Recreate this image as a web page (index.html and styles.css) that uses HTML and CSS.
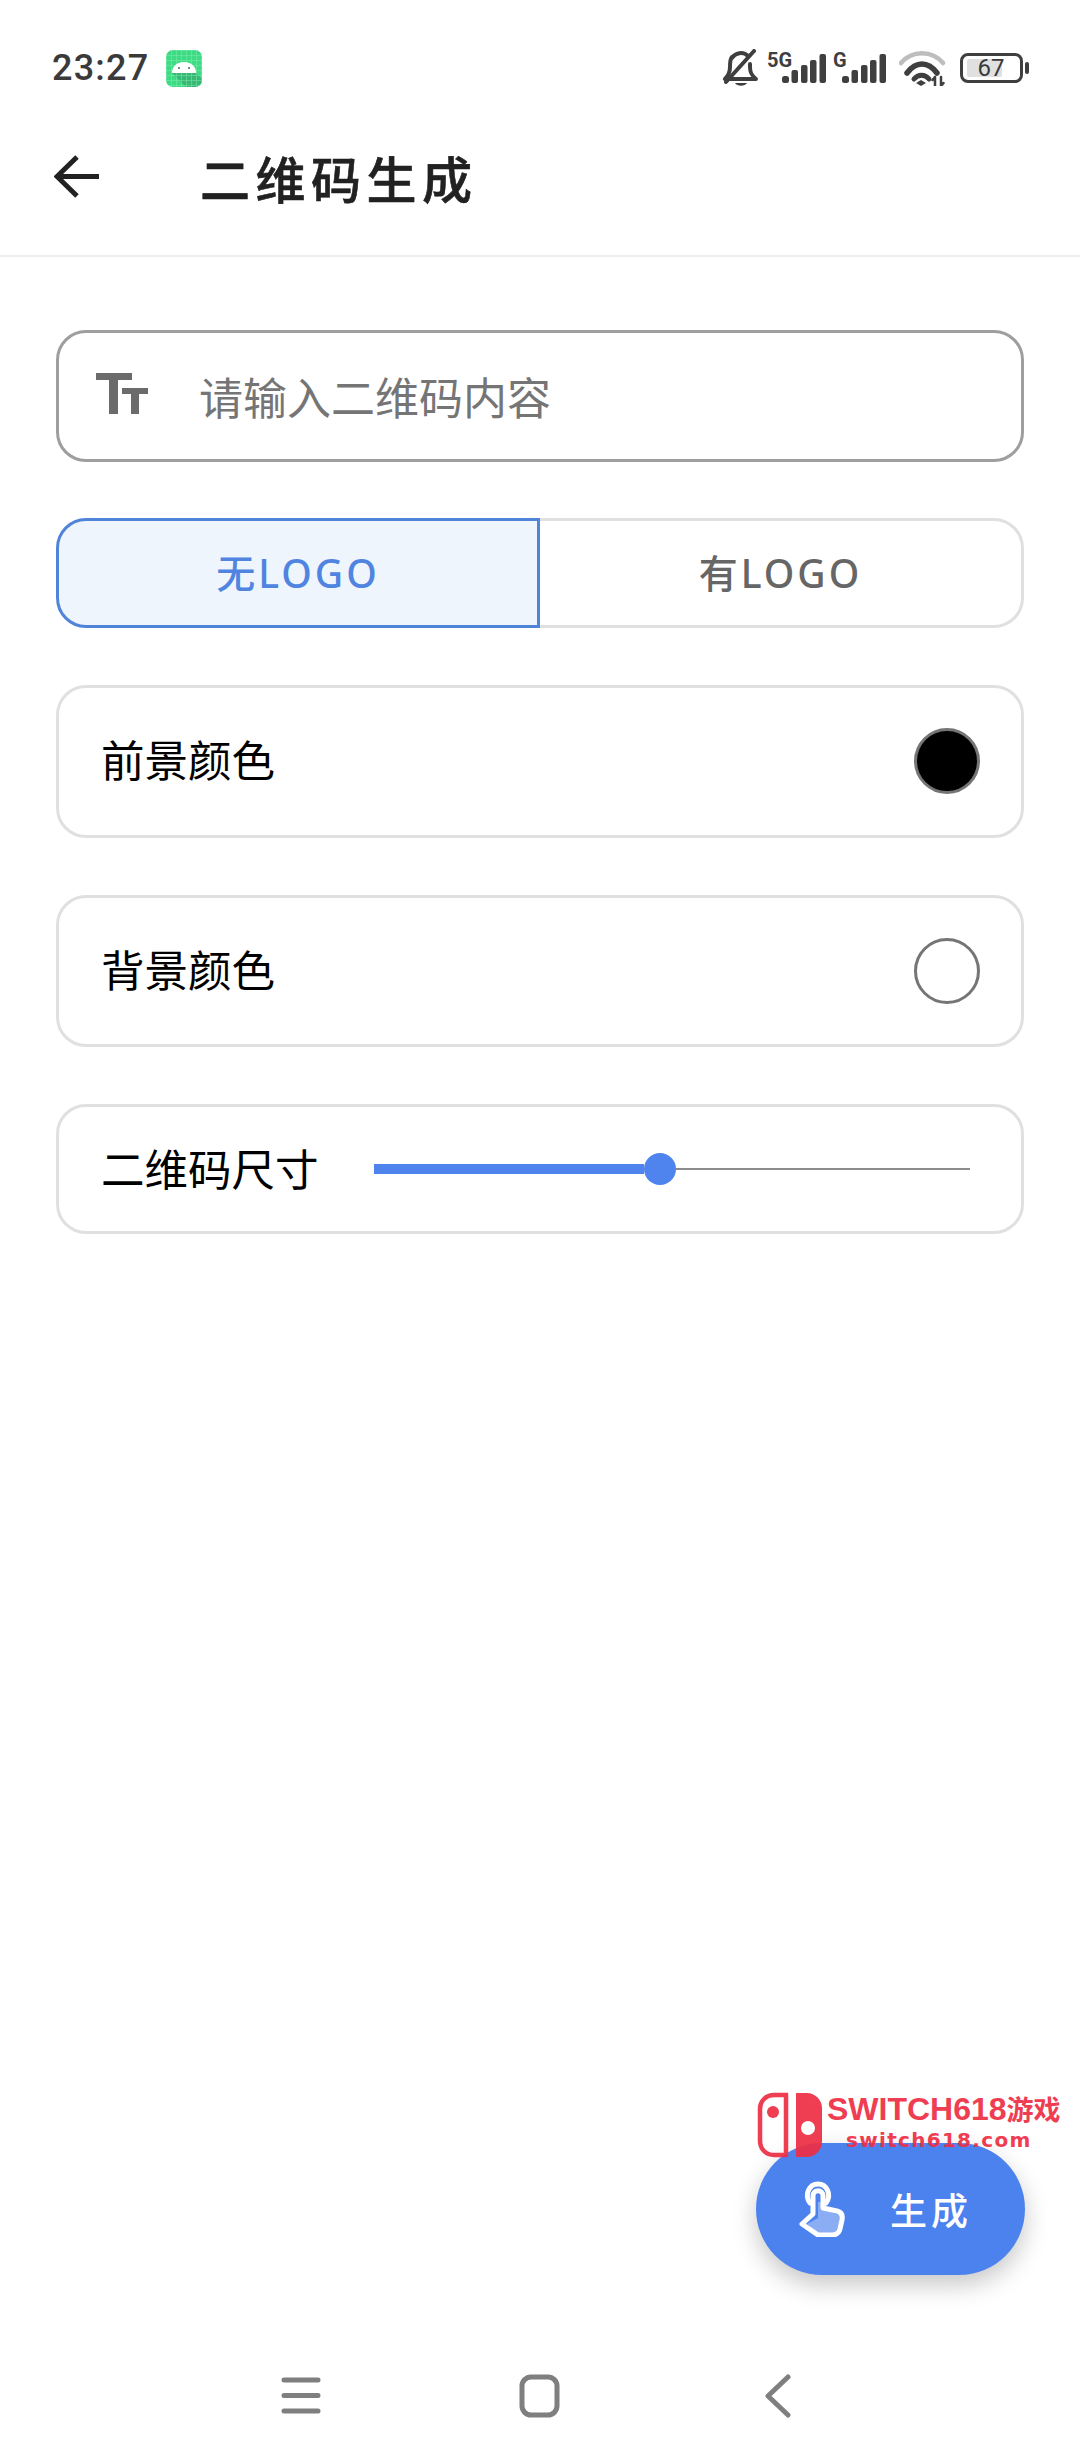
FILE: index.html
```html
<!DOCTYPE html>
<html lang="zh-CN">
<head>
    <meta charset="UTF-8">
    <meta name="viewport" content="width=device-width, initial-scale=1.0">
    <title>二维码生成</title>
    <link rel="stylesheet" href="styles.css">
</head>
<body>
<div class="page">
    <div class="status-bar">
        <span class="clock">23:27</span>
        <svg class="app-icon" width="36" height="37" viewBox="0 0 36 37">
            <defs>
                <pattern id="grid" width="5" height="5" patternUnits="userSpaceOnUse">
                    <path d="M0 0H5M0 0V5" stroke="#8ff0b8" stroke-width="1" fill="none"/>
                </pattern>
                <clipPath id="appClip"><rect width="36" height="37" rx="7"/></clipPath>
            </defs>
            <g clip-path="url(#appClip)">
                <rect width="36" height="37" fill="#3ddc84"/>
                <path d="M6 23L20 37H36V29L30 23Z" fill="#37b976"/>
                <rect width="36" height="37" fill="url(#grid)" opacity="0.8"/>
            </g>
            <path d="M6 23C6 16 11 12 18 12S30 16 30 23Z" fill="#fff"/>
            <circle cx="13" cy="18" r="1" fill="#35705a"/>
            <circle cx="23" cy="18" r="1" fill="#35705a"/>
        </svg>
        <div class="status-icons">
            <svg class="bell" width="36" height="38" viewBox="0 0 36 38" fill="none" stroke="#3f3f3f" stroke-linecap="round" stroke-linejoin="round">
                <path d="M2 30H33C28 26 27 23 27 18V15M9 8C7 10 7 13 7 18C7 23 6 26 2 30" stroke-width="4"/>
                <path d="M9 9C12 4 20 2 25 7" stroke-width="4"/>
                <path d="M3 33L31 2" stroke-width="4"/>
                <path d="M12 34H24C22 37.500 14 37.500 12 34Z" fill="#3f3f3f" stroke="none"/>
            </svg>
            <div class="signal">
                <span class="net">5G</span>
                <svg width="44" height="30" viewBox="0 0 44 30" fill="#3f3f3f">
                    <rect x="0" y="22" width="7" height="7" rx="2.500"/>
                    <rect x="9.500" y="16" width="6.500" height="13" rx="2"/>
                    <rect x="19" y="11" width="6.500" height="18" rx="2"/>
                    <rect x="28" y="6" width="6.500" height="23" rx="2"/>
                    <rect x="37.500" y="0" width="6.500" height="29" rx="2"/>
                </svg>
            </div>
            <div class="signal signal-g">
                <span class="net">G</span>
                <svg width="44" height="30" viewBox="0 0 44 30" fill="#3f3f3f">
                    <rect x="0" y="22" width="7" height="7" rx="2.500"/>
                    <rect x="9.500" y="16" width="6.500" height="13" rx="2"/>
                    <rect x="19" y="11" width="6.500" height="18" rx="2"/>
                    <rect x="28" y="6" width="6.500" height="23" rx="2"/>
                    <rect x="37.500" y="0" width="6.500" height="29" rx="2"/>
                </svg>
            </div>
            <svg class="wifi" width="48" height="36" viewBox="0 0 48 36" fill="none" stroke-linecap="round">
                <path d="M2 13C13 0 33 0 44 13" stroke="#bdbdbd" stroke-width="4.500"/>
                <path d="M8 23C17 11 29 11 38 23" stroke="#3f3f3f" stroke-width="5.500"/>
                <path d="M15 29C19 24 26 24 30 29" stroke="#3f3f3f" stroke-width="5"/>
                <path d="M17 33L22 30L27 33L22 36Z" fill="#3f3f3f"/>
                <path d="M36 27V36M36 27L33.500 30M42 27V36M42 36L44.500 33" stroke="#3f3f3f" stroke-width="2.500"/>
            </svg>
            <div class="battery">
                <div class="battery-body">
                    <div class="battery-fill"></div>
                    <span class="battery-num">67</span>
                </div>
                <div class="battery-nub"></div>
            </div>
        </div>
    </div>

    <div class="toolbar">
        <svg class="back" width="46" height="46" viewBox="0 0 46 46" fill="none" stroke="#212121" stroke-width="5">
            <path d="M45 22.500H3M23 3L3 22.500L23 42"/>
        </svg>
        <h1 class="title">二维码生成</h1>
    </div>

    <div class="content">
        <div class="card input-box">
            <svg class="tt" width="52" height="42" viewBox="0 0 52 42" fill="#6b6b6b">
                <path d="M0 0H36V7H22V41H13V7H0Z"/>
                <path d="M26 15H52V21H43V41H35V21H26Z"/>
            </svg>
            <span class="placeholder">请输入二维码内容</span>
        </div>

        <div class="segment">
            <div class="seg-item seg-on">无LOGO</div>
            <div class="seg-item seg-off">有LOGO</div>
        </div>

        <div class="card row">
            <span class="label">前景颜色</span>
            <span class="swatch swatch-black"></span>
        </div>

        <div class="card row">
            <span class="label">背景颜色</span>
            <span class="swatch"></span>
        </div>

        <div class="card size-row">
            <span class="label">二维码尺寸</span>
            <div class="slider">
                <div class="slider-active"></div>
                <div class="slider-thumb"></div>
                <div class="slider-rest"></div>
            </div>
        </div>
    </div>

    <div class="nav-bar">
        <svg width="40" height="42" viewBox="0 0 40 42" fill="none" stroke="#7f7f7f" stroke-width="5" stroke-linecap="round">
            <path d="M3 5H37M3 20.500H37M3 36H37"/>
        </svg>
        <svg width="41" height="44" viewBox="0 0 41 44" fill="none" stroke="#7f7f7f" stroke-width="5">
            <rect x="3" y="3" width="35" height="38" rx="9"/>
        </svg>
        <svg class="nav-back" width="28" height="44" viewBox="0 0 28 44" fill="none" stroke="#7f7f7f" stroke-width="5" stroke-linecap="round" stroke-linejoin="round">
            <path d="M23 3L3 22L23 41"/>
        </svg>
    </div>

    <button class="fab">
        <svg width="46" height="56" viewBox="0 0 46 56" fill="none">
            <path d="M19 21V37L8 43L18 53H36L42 42V34L24 29V21Z" fill="#fff" fill-opacity="0.35"/>
            <path d="M11 22C5 14 10 3 19 3C28 3 33 14 27 22" stroke="#fff" stroke-width="5" stroke-linecap="round"/>
            <path d="M14 33V15C14 8 24 8 24 15V27L38 30C42 31 44 34 43 39L41 48C40 52 37 54 33 54H19L3 43L14 33Z" stroke="#fff" stroke-width="5" stroke-linejoin="round"/>
        </svg>
        <span class="fab-text">生成</span>
    </button>

    <div class="watermark">
        <svg width="66" height="66" viewBox="0 0 66 66">
            <path d="M29 3H17C9 3 3 9 3 17V49C3 57 9 63 17 63H29Z" fill="none" stroke="#ee2f45" stroke-width="4.500"/>
            <circle cx="16" cy="20" r="6" fill="#ee2f45"/>
            <path d="M39 1H50C58 1 65 8 65 16V50C65 58 58 65 50 65H39Z" fill="#ee2f45"/>
            <circle cx="51" cy="36" r="7" fill="#fff"/>
        </svg>
        <div class="wm-text">
            <div class="wm-top">SWITCH618<span class="wm-cjk">游戏</span></div>
            <div class="wm-bottom">switch618.com</div>
        </div>
    </div>
</div>
</body>
</html>
```

FILE: styles.css
```css
* {
    margin: 0;
    padding: 0;
    box-sizing: border-box;
}

body {
    background-color: #fff;
    font-family: "Roboto", "Noto Sans CJK SC", sans-serif;
}

.page {
    position: relative;
    display: flex;
    flex-direction: column;
    width: 1080px;
    height: 2460px;
    overflow: hidden;
}

/* Status bar */
.status-bar {
    display: flex;
    align-items: center;
    height: 96px;
    padding: 40px 51px 0 52px;
}

.clock {
    font-size: 36px;
    font-weight: 500;
    letter-spacing: 1.2px;
    color: #3a3a3a;
}

.app-icon {
    margin-left: 17px;
}

.status-icons {
    display: flex;
    align-items: center;
    margin-left: auto;
}

.bell {
    margin-right: 7px;
}

.signal {
    position: relative;
    width: 60px;
    height: 36px;
    display: flex;
    justify-content: flex-end;
    align-items: flex-start;
    padding-top: 4px;
}

.signal-g {
    margin-right: 13px;
}

.net {
    position: absolute;
    left: 1px;
    top: -1px;
    font-size: 20px;
    font-weight: 700;
    line-height: 22px;
    color: #3f3f3f;
}

.signal-g .net {
    left: 7px;
}

.wifi {
    margin-right: 13px;
}

.battery {
    display: flex;
    align-items: center;
}

.battery-body {
    position: relative;
    width: 63px;
    height: 30px;
    padding: 3px 4px;
    border: 3.5px solid #3f3f3f;
    border-radius: 8px;
}

.battery-fill {
    width: 35px;
    height: 100%;
    background-color: #e0e0e0;
    border-radius: 2px;
}

.battery-num {
    position: absolute;
    left: -1px;
    right: 0;
    top: 1px;
    bottom: 0;
    text-align: center;
    font-size: 24px;
    line-height: 23px;
    color: #3a3a3a;
}

.battery-nub {
    width: 4px;
    height: 12px;
    margin-left: 2px;
    background-color: #3f3f3f;
    border-radius: 2px;
}

/* Toolbar */
.toolbar {
    display: flex;
    align-items: center;
    height: 161px;
    padding: 3px 0 0 54px;
    border-bottom: 2px solid #eeeeee;
}

.title {
    margin-left: 100px;
    font-size: 50px;
    font-weight: 500;
    letter-spacing: 5.5px;
    color: #212121;
    -webkit-text-stroke: 0.6px #212121;
}

/* Form */
.content {
    flex: 1;
    display: flex;
    flex-direction: column;
    gap: 57px;
    padding: 73px 56px 0;
}

.card {
    border: 3px solid #e0e0e0;
    border-radius: 30px;
}

.input-box {
    display: flex;
    align-items: center;
    height: 132px;
    margin-bottom: -1px;
    padding-left: 37px;
    border-color: #9e9e9e;
}

.tt {
    margin-top: -4px;
}

.placeholder {
    margin-left: 51px;
    font-size: 44px;
    color: #757575;
}

.segment {
    display: flex;
    height: 110px;
}

.seg-item {
    flex: 1;
    display: flex;
    align-items: center;
    justify-content: center;
    padding-bottom: 4px;
    font-family: "Noto Sans", "Noto Sans CJK SC", sans-serif;
    font-size: 39px;
    font-weight: 500;
    letter-spacing: 3px;
}

.seg-on {
    flex: 0 0 484px;
    color: #4f84e0;
    background-color: #eff5fd;
    border: 3px solid #4f84d8;
    border-radius: 30px 0 0 30px;
}

.seg-off {
    color: #666666;
    border: 3px solid #e0e0e0;
    border-left: none;
    border-radius: 0 30px 30px 0;
}

.row {
    display: flex;
    align-items: center;
    justify-content: space-between;
    height: 152.5px;
    padding: 0 41px 0 42px;
}

.row .label {
    margin-bottom: 5px;
}

.label {
    font-size: 43.5px;
    color: #000;
}

.swatch {
    width: 66px;
    height: 66px;
    border: 3px solid #757575;
    border-radius: 50%;
}

.swatch-black {
    background-color: #000;
}

.size-row {
    display: flex;
    align-items: center;
    height: 130px;
    padding: 0 51px 0 42px;
}

.size-row .label {
    margin-bottom: 3px;
}

.slider {
    flex: 1;
    display: flex;
    align-items: center;
    margin-left: 55px;
}

.slider-active {
    width: 270px;
    height: 10px;
    background-color: #4f84ee;
}

.slider-thumb {
    flex: none;
    width: 32px;
    height: 32px;
    background-color: #4f84ee;
    border-radius: 50%;
}

.slider-rest {
    flex: 1;
    height: 2px;
    background-color: #8c8c8c;
}

/* Bottom navigation */
.nav-bar {
    display: flex;
    align-items: center;
    gap: 198px;
    height: 76px;
    margin-bottom: 26px;
    padding-left: 281px;
}

.nav-back {
    margin-left: 7px;
}

/* Floating button */
.fab {
    position: absolute;
    left: 756px;
    top: 2143px;
    display: flex;
    align-items: center;
    width: 269px;
    height: 132px;
    padding-left: 43px;
    color: #fff;
    background-color: #4c82ee;
    border: none;
    border-radius: 66px;
    box-shadow: 0 10px 24px rgba(0, 0, 0, 0.22);
    font-family: inherit;
}

.fab-text {
    margin-left: 45px;
    font-size: 37px;
    font-weight: 500;
    letter-spacing: 4px;
}

/* Watermark on top of the page */
.watermark {
    position: absolute;
    left: 757px;
    top: 2092px;
    display: flex;
    color: #ee2f45;
    opacity: 0.93;
}

.wm-text {
    margin-left: 4px;
    font-weight: 700;
}

.wm-top {
    font-family: "Liberation Sans", "Noto Sans CJK SC", sans-serif;
    font-size: 32px;
    line-height: 34px;
    white-space: nowrap;
}

.wm-cjk {
    font-family: "Noto Sans CJK SC", sans-serif;
    font-size: 27px;
}

.wm-bottom {
    margin-top: 2px;
    margin-left: 19px;
    font-family: "DejaVu Sans", sans-serif;
    font-size: 20px;
    line-height: 24px;
    letter-spacing: 1.3px;
    white-space: nowrap;
}
```
